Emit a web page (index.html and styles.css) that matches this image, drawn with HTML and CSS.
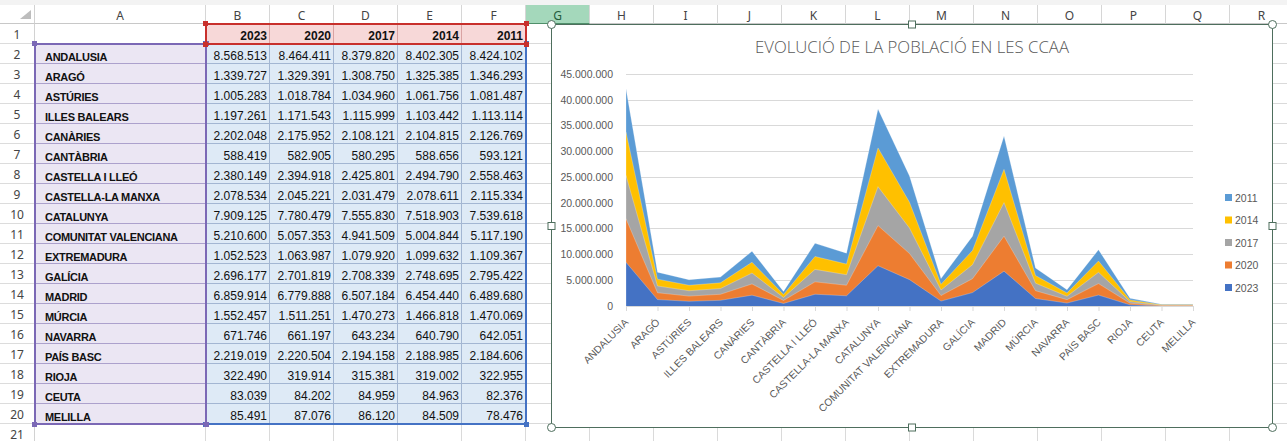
FILE: index.html
```html
<!DOCTYPE html>
<html lang="ca">
<head>
<meta charset="utf-8">
<title>Evolució de la població</title>
<link rel="stylesheet" href="styles.css">
</head>
<body>
<div class="sheet">
  <div class="topband"></div>
  <div class="hdr">
    <div class="corner"><span class="tri"></span></div>
    <div class="ch wa">A</div>
    <div class="ch">B</div><div class="ch">C</div><div class="ch">D</div><div class="ch">E</div><div class="ch">F</div>
    <div class="ch sel">G</div><div class="ch">H</div><div class="ch">I</div><div class="ch">J</div><div class="ch">K</div><div class="ch">L</div>
    <div class="ch">M</div><div class="ch">N</div><div class="ch">O</div><div class="ch">P</div><div class="ch">Q</div><div class="ch">R</div>
  </div>

  <div class="row"><div class="rn">1</div><div class="c a"></div><div class="c ser">2023</div><div class="c ser">2020</div><div class="c ser">2017</div><div class="c ser">2014</div><div class="c ser">2011</div><div class="rest"></div></div>
  <div class="row"><div class="rn">2</div><div class="c a cat">ANDALUSIA</div><div class="c val">8.568.513</div><div class="c val">8.464.411</div><div class="c val">8.379.820</div><div class="c val">8.402.305</div><div class="c val">8.424.102</div><div class="rest"></div></div>
  <div class="row"><div class="rn">3</div><div class="c a cat">ARAGÓ</div><div class="c val">1.339.727</div><div class="c val">1.329.391</div><div class="c val">1.308.750</div><div class="c val">1.325.385</div><div class="c val">1.346.293</div><div class="rest"></div></div>
  <div class="row"><div class="rn">4</div><div class="c a cat">ASTÚRIES</div><div class="c val">1.005.283</div><div class="c val">1.018.784</div><div class="c val">1.034.960</div><div class="c val">1.061.756</div><div class="c val">1.081.487</div><div class="rest"></div></div>
  <div class="row"><div class="rn">5</div><div class="c a cat">ILLES BALEARS</div><div class="c val">1.197.261</div><div class="c val">1.171.543</div><div class="c val">1.115.999</div><div class="c val">1.103.442</div><div class="c val">1.113.114</div><div class="rest"></div></div>
  <div class="row"><div class="rn">6</div><div class="c a cat">CANÀRIES</div><div class="c val">2.202.048</div><div class="c val">2.175.952</div><div class="c val">2.108.121</div><div class="c val">2.104.815</div><div class="c val">2.126.769</div><div class="rest"></div></div>
  <div class="row"><div class="rn">7</div><div class="c a cat">CANTÀBRIA</div><div class="c val">588.419</div><div class="c val">582.905</div><div class="c val">580.295</div><div class="c val">588.656</div><div class="c val">593.121</div><div class="rest"></div></div>
  <div class="row"><div class="rn">8</div><div class="c a cat">CASTELLA I LLEÓ</div><div class="c val">2.380.149</div><div class="c val">2.394.918</div><div class="c val">2.425.801</div><div class="c val">2.494.790</div><div class="c val">2.558.463</div><div class="rest"></div></div>
  <div class="row"><div class="rn">9</div><div class="c a cat">CASTELLA-LA MANXA</div><div class="c val">2.078.534</div><div class="c val">2.045.221</div><div class="c val">2.031.479</div><div class="c val">2.078.611</div><div class="c val">2.115.334</div><div class="rest"></div></div>
  <div class="row"><div class="rn">10</div><div class="c a cat">CATALUNYA</div><div class="c val">7.909.125</div><div class="c val">7.780.479</div><div class="c val">7.555.830</div><div class="c val">7.518.903</div><div class="c val">7.539.618</div><div class="rest"></div></div>
  <div class="row"><div class="rn">11</div><div class="c a cat">COMUNITAT VALENCIANA</div><div class="c val">5.210.600</div><div class="c val">5.057.353</div><div class="c val">4.941.509</div><div class="c val">5.004.844</div><div class="c val">5.117.190</div><div class="rest"></div></div>
  <div class="row"><div class="rn">12</div><div class="c a cat">EXTREMADURA</div><div class="c val">1.052.523</div><div class="c val">1.063.987</div><div class="c val">1.079.920</div><div class="c val">1.099.632</div><div class="c val">1.109.367</div><div class="rest"></div></div>
  <div class="row"><div class="rn">13</div><div class="c a cat">GALÍCIA</div><div class="c val">2.696.177</div><div class="c val">2.701.819</div><div class="c val">2.708.339</div><div class="c val">2.748.695</div><div class="c val">2.795.422</div><div class="rest"></div></div>
  <div class="row"><div class="rn">14</div><div class="c a cat">MADRID</div><div class="c val">6.859.914</div><div class="c val">6.779.888</div><div class="c val">6.507.184</div><div class="c val">6.454.440</div><div class="c val">6.489.680</div><div class="rest"></div></div>
  <div class="row"><div class="rn">15</div><div class="c a cat">MÚRCIA</div><div class="c val">1.552.457</div><div class="c val">1.511.251</div><div class="c val">1.470.273</div><div class="c val">1.466.818</div><div class="c val">1.470.069</div><div class="rest"></div></div>
  <div class="row"><div class="rn">16</div><div class="c a cat">NAVARRA</div><div class="c val">671.746</div><div class="c val">661.197</div><div class="c val">643.234</div><div class="c val">640.790</div><div class="c val">642.051</div><div class="rest"></div></div>
  <div class="row"><div class="rn">17</div><div class="c a cat">PAÍS BASC</div><div class="c val">2.219.019</div><div class="c val">2.220.504</div><div class="c val">2.194.158</div><div class="c val">2.188.985</div><div class="c val">2.184.606</div><div class="rest"></div></div>
  <div class="row"><div class="rn">18</div><div class="c a cat">RIOJA</div><div class="c val">322.490</div><div class="c val">319.914</div><div class="c val">315.381</div><div class="c val">319.002</div><div class="c val">322.955</div><div class="rest"></div></div>
  <div class="row"><div class="rn">19</div><div class="c a cat">CEUTA</div><div class="c val">83.039</div><div class="c val">84.202</div><div class="c val">84.959</div><div class="c val">84.963</div><div class="c val">82.376</div><div class="rest"></div></div>
  <div class="row"><div class="rn">20</div><div class="c a cat">MELILLA</div><div class="c val">85.491</div><div class="c val">87.076</div><div class="c val">86.120</div><div class="c val">84.509</div><div class="c val">78.476</div><div class="rest"></div></div>
  <div class="row"><div class="rn">21</div><div class="c a"></div><div class="c"></div><div class="c"></div><div class="c"></div><div class="c"></div><div class="c"></div><div class="rest"></div></div>

  <div class="rng rng-val"><i class="hd tl"></i><i class="hd tr"></i><i class="hd bl"></i><i class="hd br"></i></div>
  <div class="rng rng-cat"><i class="hd tl"></i><i class="hd tr"></i><i class="hd bl"></i><i class="hd br"></i></div>
  <div class="rng rng-ser"><i class="hd tl"></i><i class="hd tr"></i><i class="hd bl"></i><i class="hd br"></i></div>

  <svg class="chart" width="732" height="414" viewBox="546 19 732 414" xmlns="http://www.w3.org/2000/svg">
    <rect class="frame" x="551.5" y="24.5" width="721" height="403"/>
    <text class="ttl" x="912" y="53" text-anchor="middle" textLength="314" lengthAdjust="spacingAndGlyphs">EVOLUCIÓ DE LA POBLACIÓ EN LES CCAA</text>

    <g class="grid">
      <line x1="626" y1="74.5" x2="1193" y2="74.5"/>
      <line x1="626" y1="100.5" x2="1193" y2="100.5"/>
      <line x1="626" y1="125.5" x2="1193" y2="125.5"/>
      <line x1="626" y1="151.5" x2="1193" y2="151.5"/>
      <line x1="626" y1="177.5" x2="1193" y2="177.5"/>
      <line x1="626" y1="203.5" x2="1193" y2="203.5"/>
      <line x1="626" y1="228.5" x2="1193" y2="228.5"/>
      <line x1="626" y1="254.5" x2="1193" y2="254.5"/>
      <line x1="626" y1="280.5" x2="1193" y2="280.5"/>
    </g>
    <g class="ylab" text-anchor="end">
      <text x="613" y="78">45.000.000</text>
      <text x="613" y="104">40.000.000</text>
      <text x="613" y="129">35.000.000</text>
      <text x="613" y="155">30.000.000</text>
      <text x="613" y="181">25.000.000</text>
      <text x="613" y="207">20.000.000</text>
      <text x="613" y="232">15.000.000</text>
      <text x="613" y="258">10.000.000</text>
      <text x="613" y="284">5.000.000</text>
      <text x="613" y="310">0</text>
    </g>

    <g transform="translate(626 306.5) scale(31.5 -0.515556)" class="areas">
      <polygon fill="#5b9bd5" points="0,0 0,422.4 1,66.5 2,52 3,57 4,107.2 5,29.3 6,122.5 7,103.5 8,383 9,253.3 10,54.1 11,136.5 12,330.9 13,74.7 14,32.6 15,110.1 16,16 17,4.2 18,4.2 18,0"/>
      <polygon fill="#ffc000" points="0,0 0,338.2 1,53 2,41.2 3,45.9 4,85.9 5,23.4 6,97 7,82.3 8,307.6 9,202.1 10,43 11,108.6 12,266 13,60 14,26.2 15,88.2 16,12.8 17,3.4 18,3.4 18,0"/>
      <polygon fill="#a5a5a5" points="0,0 0,254.1 1,39.8 2,30.6 3,34.8 4,64.9 5,17.5 6,72 7,61.6 8,232.5 9,152.1 10,32 11,81.1 12,201.5 13,45.3 14,19.8 15,66.3 16,9.6 17,2.5 18,2.6 18,0"/>
      <polygon fill="#ed7d31" points="0,0 0,170.3 1,26.7 2,20.2 3,23.7 4,43.8 5,11.7 6,47.8 7,41.2 8,156.9 9,102.7 10,21.2 11,54 12,136.4 13,30.6 14,13.3 15,44.4 16,6.4 17,1.7 18,1.7 18,0"/>
      <polygon fill="#4472c4" points="0,0 0,85.7 1,13.4 2,10.1 3,12 4,22 5,5.9 6,23.8 7,20.8 8,79.1 9,52.1 10,10.5 11,27 12,68.6 13,15.5 14,6.7 15,22.2 16,3.2 17,0.8 18,0.9 18,0"/>
    </g>

    <g class="axis">
      <line x1="626" y1="306.5" x2="1193" y2="306.5"/>
      <line x1="626.5" y1="306" x2="626.5" y2="311"/>
      <line x1="658" y1="306" x2="658" y2="311"/>
      <line x1="689.5" y1="306" x2="689.5" y2="311"/>
      <line x1="721" y1="306" x2="721" y2="311"/>
      <line x1="752.5" y1="306" x2="752.5" y2="311"/>
      <line x1="784" y1="306" x2="784" y2="311"/>
      <line x1="815.5" y1="306" x2="815.5" y2="311"/>
      <line x1="847" y1="306" x2="847" y2="311"/>
      <line x1="878.5" y1="306" x2="878.5" y2="311"/>
      <line x1="910" y1="306" x2="910" y2="311"/>
      <line x1="941.5" y1="306" x2="941.5" y2="311"/>
      <line x1="973" y1="306" x2="973" y2="311"/>
      <line x1="1004.5" y1="306" x2="1004.5" y2="311"/>
      <line x1="1036" y1="306" x2="1036" y2="311"/>
      <line x1="1067.5" y1="306" x2="1067.5" y2="311"/>
      <line x1="1099" y1="306" x2="1099" y2="311"/>
      <line x1="1130.5" y1="306" x2="1130.5" y2="311"/>
      <line x1="1162" y1="306" x2="1162" y2="311"/>
      <line x1="1193.5" y1="306" x2="1193.5" y2="311"/>
    </g>

    <g class="xlab" text-anchor="end">
      <text transform="translate(629 323) rotate(-45)">ANDALUSIA</text>
      <text transform="translate(660.5 323) rotate(-45)">ARAGÓ</text>
      <text transform="translate(692 323) rotate(-45)">ASTÚRIES</text>
      <text transform="translate(723.5 323) rotate(-45)">ILLES BALEARS</text>
      <text transform="translate(755 323) rotate(-45)">CANÀRIES</text>
      <text transform="translate(786.5 323) rotate(-45)">CANTÀBRIA</text>
      <text transform="translate(818 323) rotate(-45)">CASTELLA I LLEÓ</text>
      <text transform="translate(849.5 323) rotate(-45)">CASTELLA-LA MANXA</text>
      <text transform="translate(881 323) rotate(-45)">CATALUNYA</text>
      <text transform="translate(912.5 323) rotate(-45)">COMUNITAT VALENCIANA</text>
      <text transform="translate(944 323) rotate(-45)">EXTREMADURA</text>
      <text transform="translate(975.5 323) rotate(-45)">GALÍCIA</text>
      <text transform="translate(1007 323) rotate(-45)">MADRID</text>
      <text transform="translate(1038.5 323) rotate(-45)">MÚRCIA</text>
      <text transform="translate(1070 323) rotate(-45)">NAVARRA</text>
      <text transform="translate(1101.5 323) rotate(-45)">PAÍS BASC</text>
      <text transform="translate(1133 323) rotate(-45)">RIOJA</text>
      <text transform="translate(1164.5 323) rotate(-45)">CEUTA</text>
      <text transform="translate(1196 323) rotate(-45)">MELILLA</text>
    </g>

    <g class="legend">
      <rect x="1225" y="194" width="7" height="7" fill="#5b9bd5"/><text x="1235" y="201.5">2011</text>
      <rect x="1225" y="216.5" width="7" height="7" fill="#ffc000"/><text x="1235" y="224">2014</text>
      <rect x="1225" y="239" width="7" height="7" fill="#a5a5a5"/><text x="1235" y="246.5">2017</text>
      <rect x="1225" y="261.5" width="7" height="7" fill="#ed7d31"/><text x="1235" y="269">2020</text>
      <rect x="1225" y="284" width="7" height="7" fill="#4472c4"/><text x="1235" y="291.5">2023</text>
    </g>

    <g class="handles">
      <circle cx="551.5" cy="24.5" r="4"/>
      <circle cx="1272.5" cy="24.5" r="4"/>
      <circle cx="551.5" cy="427.5" r="4"/>
      <circle cx="1272.5" cy="427.5" r="4"/>
      <rect x="908.5" y="21" width="7" height="7"/>
      <rect x="908.5" y="424" width="7" height="7"/>
      <rect x="548" y="222.5" width="7" height="7"/>
      <rect x="1269" y="222.5" width="7" height="7"/>
    </g>
  </svg>
</div>
</body>
</html>
```

FILE: styles.css
```css
* {
  box-sizing: border-box;
  margin: 0;
  padding: 0;
}

body {
  margin: 0;
  width: 1287px;
  height: 441px;
  overflow: hidden;
  background: #ffffff;
  font-family: "Liberation Sans", Arial, sans-serif;
  color: #111111;
}

.sheet {
  position: relative;
  width: 1287px;
  height: 441px;
  overflow: hidden;
}

.topband {
  height: 5px;
  background: #f3f3f3;
}

/* column header row */
.hdr {
  display: flex;
  height: 19px;
  background: #ffffff;
}

.corner {
  flex: none;
  width: 35px;
  display: flex;
  align-items: flex-end;
  justify-content: flex-end;
  padding: 0 3px 4px 0;
  border-right: 1px solid #d2d2d2;
  border-bottom: 1px solid #c8c8c8;
}

.tri {
  display: block;
  width: 11px;
  height: 9px;
  background: #bdbdbd;
  clip-path: polygon(100% 0, 100% 100%, 0 100%);
}

.ch {
  flex: none;
  width: 64px;
  display: flex;
  align-items: center;
  justify-content: center;
  padding-top: 3px;
  font-family: "Noto Sans", "Liberation Sans", sans-serif;
  font-size: 12px;
  line-height: 14px;
  color: #444444;
  border-right: 1px solid #d6d6d6;
  border-bottom: 1px solid #c8c8c8;
}

.ch.wa {
  width: 171px;
}

.ch.sel {
  background: #a4d8bb;
  color: #245c3d;
  border-bottom-color: #4f8f6a;
}

/* data rows */
.row {
  display: flex;
  height: 20px;
}

.rn {
  flex: none;
  width: 35px;
  display: flex;
  align-items: flex-end;
  justify-content: center;
  padding-bottom: 1px;
  font-family: "Noto Sans", "Liberation Sans", sans-serif;
  font-size: 12px;
  line-height: 14px;
  color: #444444;
  border-right: 1px solid #d2d2d2;
  border-bottom: 1px solid #dcdcdc;
}

.c {
  flex: none;
  width: 64px;
  display: flex;
  align-items: flex-end;
  justify-content: flex-end;
  padding-right: 2px;
  font-size: 12px;
  line-height: 14px;
  white-space: nowrap;
  overflow: hidden;
  border-right: 1px solid #dadada;
  border-bottom: 1px solid #dadada;
}

.c.a {
  width: 171px;
  justify-content: flex-start;
  padding-left: 10px;
  font-size: 11px;
  line-height: 12px;
  font-weight: bold;
  letter-spacing: -0.3px;
}

.cat {
  background: #ebe6f3;
  border-right-color: #aca1cc;
  border-bottom-color: #aca1cc;
}

.val {
  background: #deeaf6;
  border-right-color: #a3b6d2;
  border-bottom-color: #a3b6d2;
}

.ser {
  background: #f7d8d8;
  font-weight: bold;
  border-right-color: #d9a3a3;
  border-bottom-color: #d9a3a3;
}

.rest {
  flex: none;
  width: 768px;
  border-bottom: 1px solid #dadada;
  background: repeating-linear-gradient(to right, transparent 0 63px, #dadada 63px 64px);
}

/* chart data range highlights (drawn over the cells) */
.rng {
  position: absolute;
  border: 2px solid;
}

.rng-val {
  left: 205px;
  top: 43px;
  width: 322px;
  height: 382px;
  border-color: #4472c4;
}

.rng-cat {
  left: 34px;
  top: 43px;
  width: 173px;
  height: 382px;
  border-color: #7b68b5;
}

.rng-ser {
  left: 205px;
  top: 23px;
  width: 322px;
  height: 22px;
  border-color: #c8302c;
}

.hd {
  position: absolute;
  width: 5px;
  height: 5px;
}

.rng-val .hd { background: #4472c4; }
.rng-cat .hd { background: #7b68b5; }
.rng-ser .hd { background: #c8302c; }

.hd.tl { left: -4px; top: -4px; }
.hd.tr { right: -4px; top: -4px; }
.hd.bl { left: -4px; bottom: -4px; }
.hd.br { right: -4px; bottom: -4px; }

/* floating chart object */
.chart {
  position: absolute;
  left: 546px;
  top: 19px;
  display: block;
}

.frame {
  fill: #ffffff;
  stroke: #4e6e5d;
  stroke-width: 1;
}

.ttl {
  font-family: "Open Sans", "Liberation Sans", sans-serif;
  font-weight: 300;
  font-size: 17px;
  fill: #595959;
}

.grid line,
.axis line {
  stroke: #d9d9d9;
  stroke-width: 1;
}

.ylab text,
.legend text {
  font-family: "Liberation Sans", Arial, sans-serif;
  font-size: 10.5px;
  fill: #595959;
}

.xlab text {
  font-family: "Liberation Sans", Arial, sans-serif;
  font-size: 10.3px;
  fill: #595959;
}

.areas polygon {
  stroke: #ffffff;
  stroke-opacity: 0.35;
  stroke-width: 0.7;
  vector-effect: non-scaling-stroke;
}

.handles circle,
.handles rect {
  fill: #ffffff;
  stroke: #4e6e5d;
  stroke-width: 1;
}
```
